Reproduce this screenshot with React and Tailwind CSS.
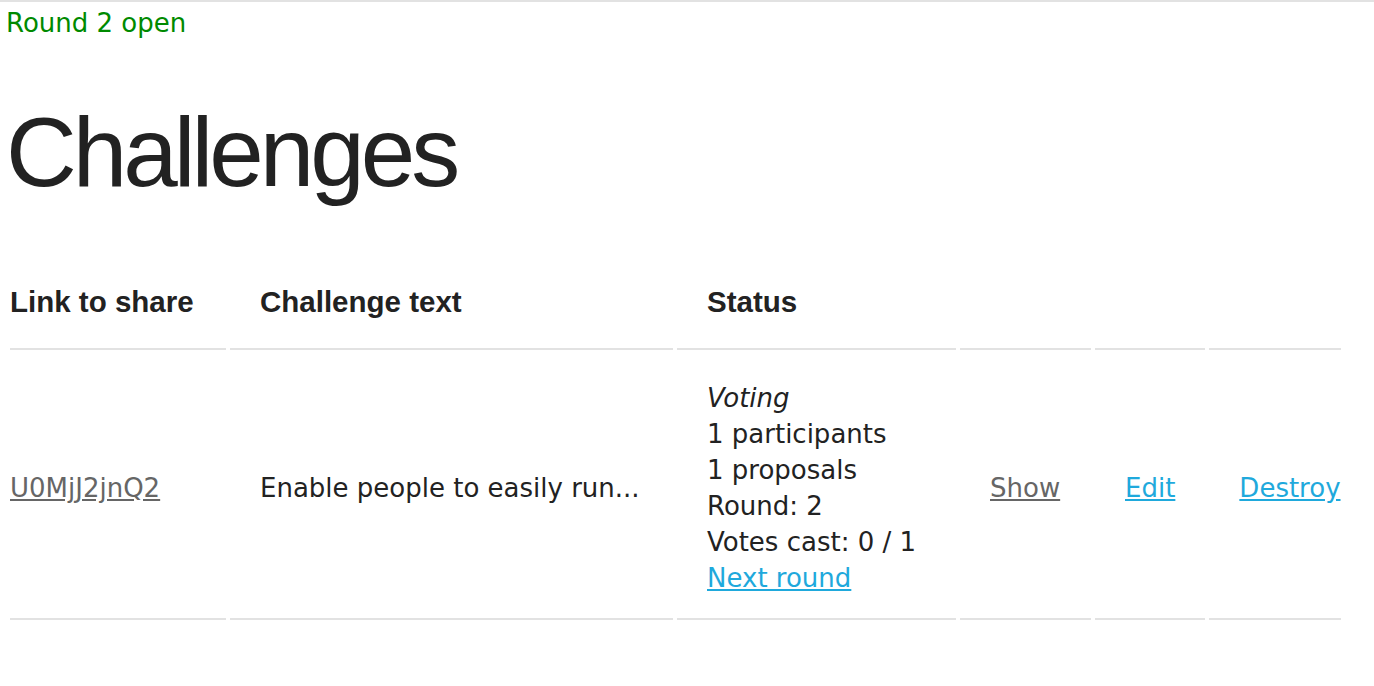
import React from "react";

const body = { fontFamily: '"DejaVu Sans", Verdana, sans-serif' };
const head = { fontFamily: '"Liberation Sans", Helvetica, Arial, sans-serif' };

const challenges = [
  {
    id: "U0MjJ2jnQ2",
    text: "Enable people to easily run...",
    status: "Voting",
    participants: 1,
    proposals: 1,
    round: 2,
    votes: 0,
    voters: 1,
  },
];

export default function App() {
  return (
    <div className="min-h-screen bg-white text-[#222] border-t-2 border-[#e2e2e2] pl-[6px]" style={body}>
      <p className="mt-[3px] text-[26px] leading-[36px] text-[#008a00]">Round 2 open</p>

      <h1 className="mt-[62px] text-[98px] leading-none font-light tracking-[-4px] text-[#222]" style={head}>
        Challenges
      </h1>

      <table className="mt-[55px] border-separate border-spacing-[4px] text-[26px] leading-[36px]">
        <thead>
          <tr style={head} className="text-left text-[29.5px] font-bold">
            <th className="w-[216px] pl-0 pr-[30px] pt-[24px] pb-[28px] border-b-2 border-[#e2e2e2]">Link to share</th>
            <th className="w-[443px] px-[30px] pt-[24px] pb-[28px] border-b-2 border-[#e2e2e2]">Challenge text</th>
            <th className="w-[279px] px-[30px] pt-[24px] pb-[28px] border-b-2 border-[#e2e2e2]">Status</th>
            <th className="w-[131px] px-[30px] pt-[24px] pb-[28px] border-b-2 border-[#e2e2e2]"></th>
            <th className="w-[110px] px-[30px] pt-[24px] pb-[28px] border-b-2 border-[#e2e2e2]"></th>
            <th className="w-[132px] pl-[30px] pr-0 pt-[24px] pb-[28px] border-b-2 border-[#e2e2e2]"></th>
          </tr>
        </thead>
        <tbody>
          {challenges.map((c) => (
            <tr key={c.id}>
              <td className="pl-0 pr-[30px] pt-[26px] pb-[22px] border-b-2 border-[#e2e2e2]">
                <a href="#" className="text-[#666] underline">{c.id}</a>
              </td>
              <td className="px-[30px] pt-[26px] pb-[22px] border-b-2 border-[#e2e2e2] whitespace-nowrap">{c.text}</td>
              <td className="px-[30px] pt-[26px] pb-[22px] border-b-2 border-[#e2e2e2] whitespace-nowrap">
                <div className="italic">{c.status}</div>
                <div>{c.participants} participants</div>
                <div>{c.proposals} proposals</div>
                <div>Round: {c.round}</div>
                <div>Votes cast: {c.votes} / {c.voters}</div>
                <a href="#" className="text-[#1fa9dc] underline">Next round</a>
              </td>
              <td className="px-[30px] pt-[26px] pb-[22px] border-b-2 border-[#e2e2e2]">
                <a href="#" className="text-[#666] underline">Show</a>
              </td>
              <td className="px-[30px] pt-[26px] pb-[22px] border-b-2 border-[#e2e2e2]">
                <a href="#" className="text-[#1fa9dc] underline">Edit</a>
              </td>
              <td className="pl-[30px] pr-0 pt-[26px] pb-[22px] border-b-2 border-[#e2e2e2]">
                <a href="#" className="text-[#1fa9dc] underline">Destroy</a>
              </td>
            </tr>
          ))}
        </tbody>
      </table>
    </div>
  );
}
